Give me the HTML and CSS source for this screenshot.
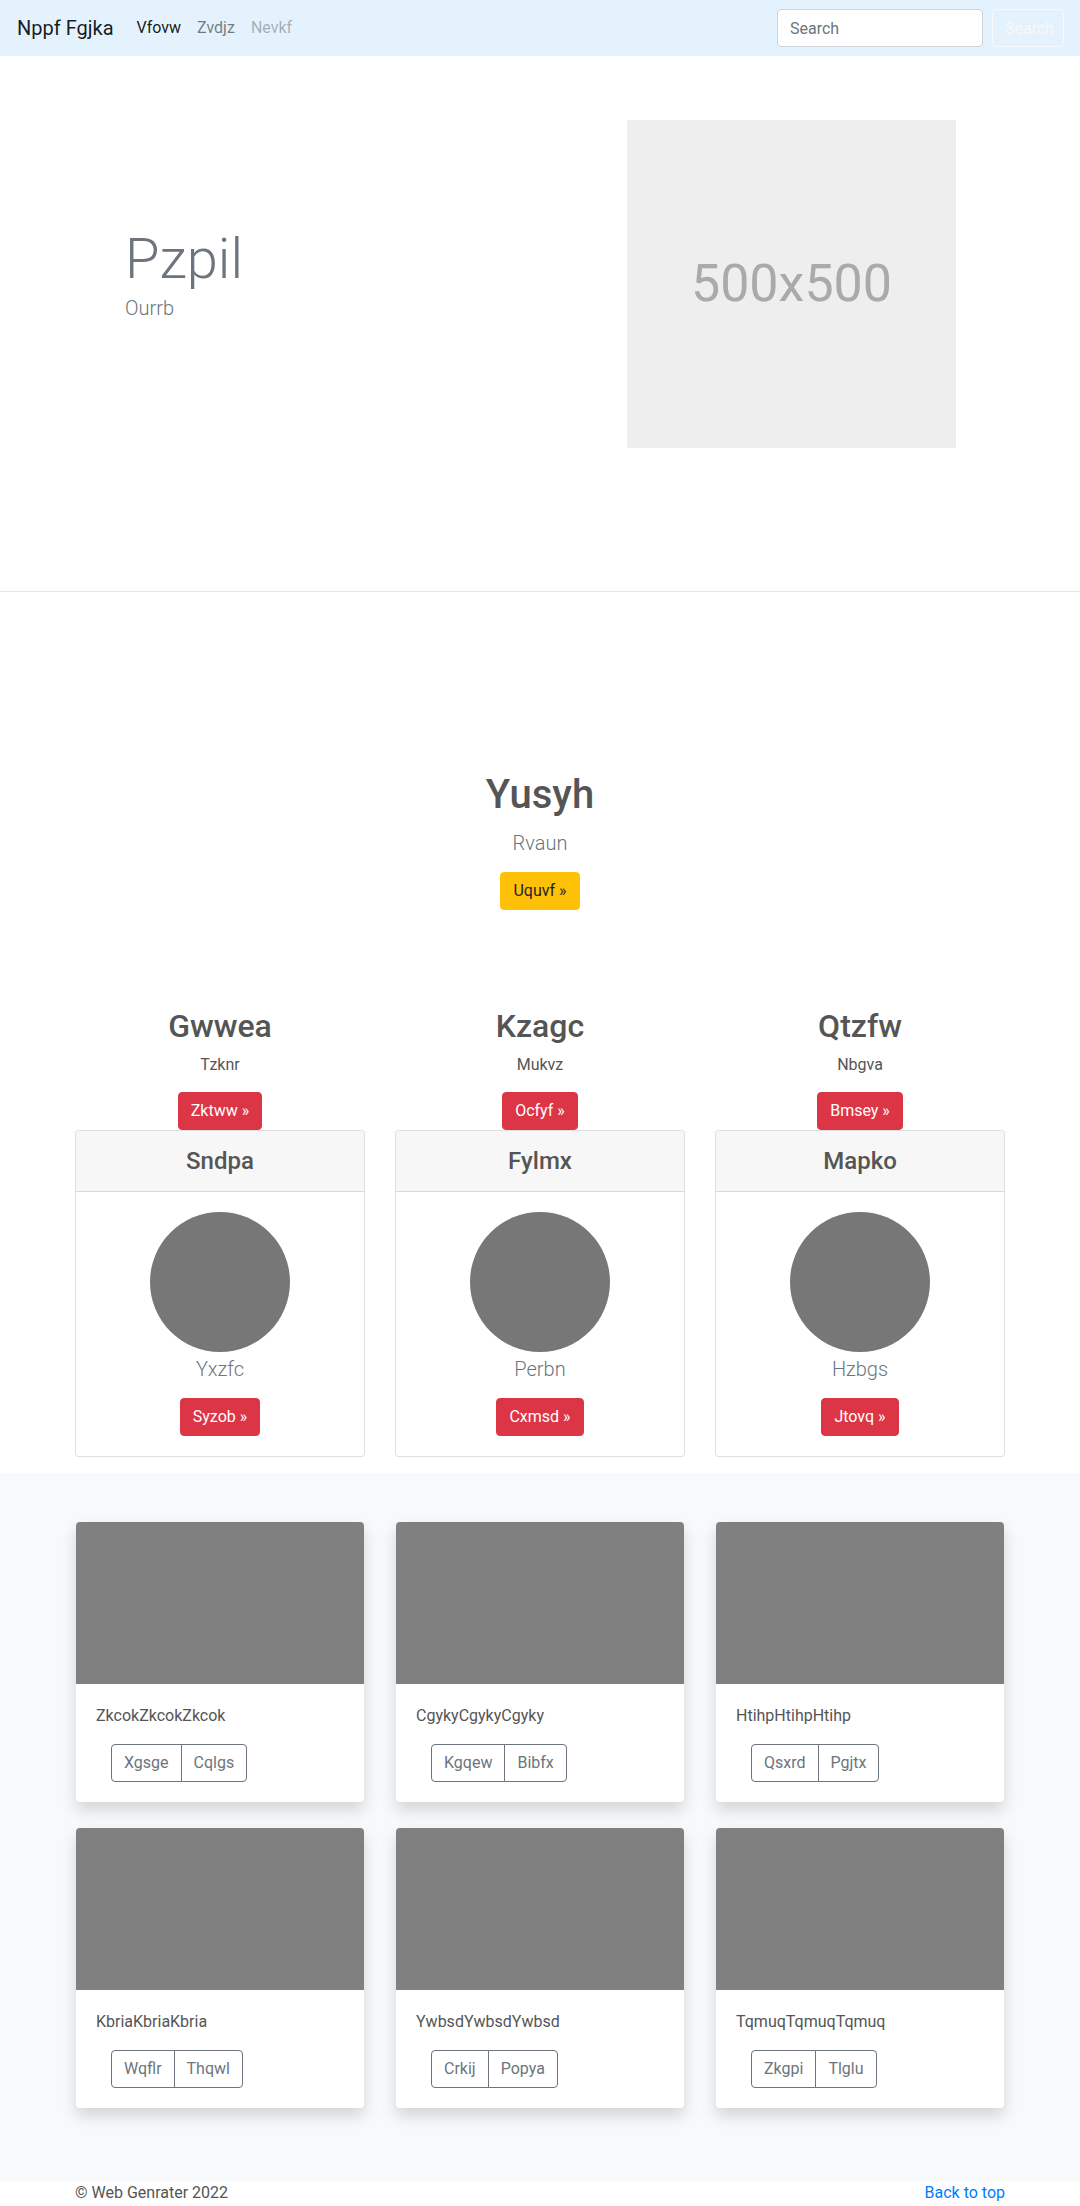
FILE: index.html
```html
<!DOCTYPE html>
<html lang="en">
<head>
<meta charset="utf-8">
<title>Nppf Fgjka</title>
<link rel="stylesheet" href="styles.css">
</head>
<body>
<nav class="navbar">
  <a class="brand" href="#">Nppf Fgjka</a>
  <ul class="nav">
    <li><a class="nav-link active" href="#">Vfovw</a></li>
    <li><a class="nav-link" href="#">Zvdjz</a></li>
    <li><a class="nav-link disabled" href="#">Nevkf</a></li>
  </ul>
  <form class="search">
    <input class="search-input" type="text" placeholder="Search">
    <button class="search-btn" type="button">Search</button>
  </form>
</nav>

<section class="hero">
  <div class="hero-row">
    <div class="hero-text">
      <h1 class="display">Pzpil</h1>
      <p class="hero-lead">Ourrb</p>
    </div>
    <div class="hero-media">
      <div class="placeholder">500x500</div>
    </div>
  </div>
</section>

<section class="intro">
  <h1 class="intro-title">Yusyh</h1>
  <p class="intro-lead">Rvaun</p>
  <a class="btn btn-warning" href="#">Uquvf »</a>
</section>

<section class="features">
  <div class="feature">
    <h2 class="feature-title">Gwwea</h2>
    <p class="feature-text">Tzknr</p>
    <a class="btn btn-danger" href="#">Zktww »</a>
    <div class="fcard">
      <div class="fcard-header"><h4>Sndpa</h4></div>
      <div class="fcard-body">
        <div class="avatar"></div>
        <p class="fcard-lead">Yxzfc</p>
        <a class="btn btn-danger" href="#">Syzob »</a>
      </div>
    </div>
  </div>
  <div class="feature">
    <h2 class="feature-title">Kzagc</h2>
    <p class="feature-text">Mukvz</p>
    <a class="btn btn-danger" href="#">Ocfyf »</a>
    <div class="fcard">
      <div class="fcard-header"><h4>Fylmx</h4></div>
      <div class="fcard-body">
        <div class="avatar"></div>
        <p class="fcard-lead">Perbn</p>
        <a class="btn btn-danger" href="#">Cxmsd »</a>
      </div>
    </div>
  </div>
  <div class="feature">
    <h2 class="feature-title">Qtzfw</h2>
    <p class="feature-text">Nbgva</p>
    <a class="btn btn-danger" href="#">Bmsey »</a>
    <div class="fcard">
      <div class="fcard-header"><h4>Mapko</h4></div>
      <div class="fcard-body">
        <div class="avatar"></div>
        <p class="fcard-lead">Hzbgs</p>
        <a class="btn btn-danger" href="#">Jtovq »</a>
      </div>
    </div>
  </div>
</section>

<section class="album">
  <div class="album-grid">
    <div class="acard">
      <div class="acard-img"></div>
      <div class="acard-body">
        <p class="acard-text">ZkcokZkcokZkcok</p>
        <div class="btn-group"><button class="gbtn">Xgsge</button><button class="gbtn">Cqlgs</button></div>
      </div>
    </div>
    <div class="acard">
      <div class="acard-img"></div>
      <div class="acard-body">
        <p class="acard-text">CgykyCgykyCgyky</p>
        <div class="btn-group"><button class="gbtn">Kgqew</button><button class="gbtn">Bibfx</button></div>
      </div>
    </div>
    <div class="acard">
      <div class="acard-img"></div>
      <div class="acard-body">
        <p class="acard-text">HtihpHtihpHtihp</p>
        <div class="btn-group"><button class="gbtn">Qsxrd</button><button class="gbtn">Pgjtx</button></div>
      </div>
    </div>
    <div class="acard">
      <div class="acard-img"></div>
      <div class="acard-body">
        <p class="acard-text">KbriaKbriaKbria</p>
        <div class="btn-group"><button class="gbtn">Wqflr</button><button class="gbtn">Thqwl</button></div>
      </div>
    </div>
    <div class="acard">
      <div class="acard-img"></div>
      <div class="acard-body">
        <p class="acard-text">YwbsdYwbsdYwbsd</p>
        <div class="btn-group"><button class="gbtn">Crkij</button><button class="gbtn">Popya</button></div>
      </div>
    </div>
    <div class="acard">
      <div class="acard-img"></div>
      <div class="acard-body">
        <p class="acard-text">TqmuqTqmuqTqmuq</p>
        <div class="btn-group"><button class="gbtn">Zkgpi</button><button class="gbtn">Tlglu</button></div>
      </div>
    </div>
  </div>
</section>

<footer class="footer">
  <p class="copy">© Web Genrater 2022</p>
  <a class="top-link" href="#">Back to top</a>
</footer>
</body>
</html>
```

FILE: styles.css
```css
* {
  box-sizing: border-box;
}

html, body {
  margin: 0;
  padding: 0;
}

body {
  font-family: Roboto, "Liberation Sans", Arial, sans-serif;
  font-size: 16px;
  line-height: 1.5;
  color: #555;
  background: #fff;
}

a {
  text-decoration: none;
}

h1, h2, h4, p {
  margin: 0;
}

/* Navbar */
.navbar {
  height: 56px;
  background: #e3f2fd;
  display: flex;
  align-items: center;
  padding: 0 16px 0 17px;
}

.brand {
  font-size: 20px;
  line-height: 30px;
  color: rgba(0, 0, 0, 0.9);
  margin-right: 15px;
}

.nav {
  list-style: none;
  margin: 0;
  padding: 0;
  display: flex;
  flex: 1;
}

.nav-link {
  display: block;
  padding: 8px 8px;
  color: rgba(0, 0, 0, 0.5);
  font-size: 16px;
}

.nav-link.active {
  color: rgba(0, 0, 0, 0.9);
}

.nav-link.disabled {
  color: rgba(0, 0, 0, 0.3);
}

.search {
  display: flex;
  align-items: center;
  gap: 9px;
}

.search-input {
  width: 206px;
  height: 38px;
  border: 1px solid #ced4da;
  border-radius: 4px;
  padding: 6px 12px;
  font-family: inherit;
  font-size: 16px;
  color: #495057;
  background: #fff;
}

.search-input::placeholder {
  color: #6c757d;
}

.search-btn {
  width: 72px;
  height: 38px;
  border: 1px solid #f8f9fa;
  border-radius: 4px;
  background: transparent;
  color: #f8f9fa;
  font-family: inherit;
  font-size: 16px;
  padding: 6px 12px;
}

/* Hero */
.hero {
  padding: 64px 0 143px;
  border-bottom: 1px solid #e5e5e5;
}

.hero-row {
  width: 960px;
  margin: 0 auto;
  display: flex;
  align-items: center;
}

.hero-text {
  flex: 0 0 480px;
  padding-left: 65px;
}

.display {
  font-size: 56px;
  font-weight: 300;
  line-height: 1.2;
  color: #6c757d;
}

.hero-lead {
  font-size: 20px;
  font-weight: 300;
  line-height: 30px;
  color: #6c757d;
  margin-bottom: 19px;
}

.hero-media {
  flex: 0 0 480px;
  padding-left: 87px;
}

.placeholder {
  width: 329px;
  height: 328px;
  background: #eeeeee;
  color: #aaaaaa;
  font-size: 52px;
  display: flex;
  align-items: center;
  justify-content: center;
}

/* Intro */
.intro {
  padding: 179px 0 97px;
  text-align: center;
}

.intro-title {
  font-size: 40px;
  font-weight: 500;
  line-height: 48px;
  color: #555;
  margin-bottom: 9px;
}

.intro-lead {
  font-size: 20px;
  font-weight: 300;
  line-height: 30px;
  color: #6c757d;
  margin-bottom: 14px;
}

/* Buttons */
.btn {
  display: inline-block;
  height: 38px;
  padding: 6px 12px;
  border-radius: 4px;
  font-size: 16px;
  line-height: 24px;
  border: 1px solid transparent;
}

.btn-warning {
  background: #ffc107;
  border-color: #ffc107;
  color: #212529;
}

.btn-danger {
  background: #dc3545;
  border-color: #dc3545;
  color: #fff;
}

/* Features */
.features {
  width: 960px;
  margin: 0 auto;
  display: grid;
  grid-template-columns: repeat(3, 1fr);
  padding-bottom: 16px;
}

.feature {
  padding: 0 15px;
  text-align: center;
}

.feature-title {
  font-size: 32px;
  font-weight: 500;
  line-height: 1.2;
  color: #555;
  margin-bottom: 8px;
}

.feature-text {
  margin-bottom: 15px;
}

.fcard {
  border: 1px solid rgba(0, 0, 0, 0.125);
  border-radius: 4px;
  background: #fff;
}

.fcard-header {
  background: #f7f7f7;
  border-bottom: 1px solid rgba(0, 0, 0, 0.125);
  padding: 16px 20px;
  border-radius: 3px 3px 0 0;
}

.fcard-header h4 {
  font-size: 24px;
  font-weight: 500;
  line-height: 28px;
  color: #555;
}

.fcard-body {
  padding: 20px;
}

.avatar {
  width: 140px;
  height: 140px;
  border-radius: 50%;
  background: #777777;
  margin: 0 auto 2px;
}

.fcard-lead {
  font-size: 20px;
  font-weight: 300;
  line-height: 30px;
  color: #6c757d;
  margin-bottom: 14px;
}

/* Album */
.album {
  background: #f8f9fa;
  padding: 49px 0 73px;
}

.album-grid {
  width: 960px;
  margin: 0 auto;
  display: grid;
  grid-template-columns: repeat(3, 1fr);
  row-gap: 26px;
}

.acard {
  margin: 0 16px;
  background: #fff;
  border-radius: 4px;
  overflow: hidden;
  box-shadow: 0 8px 16px rgba(0, 0, 0, 0.15);
}

.acard-img {
  height: 162px;
  background: #808080;
}

.acard-body {
  padding: 20px;
}

.acard-text {
  margin-bottom: 16px;
  color: #555;
}

.btn-group {
  display: inline-flex;
  margin-left: 15px;
}

.gbtn {
  height: 38px;
  padding: 6px 12px;
  font-family: inherit;
  font-size: 16px;
  line-height: 24px;
  color: #6c757d;
  background: transparent;
  border: 1px solid #6c757d;
}

.gbtn:first-child {
  border-radius: 4px 0 0 4px;
}

.gbtn + .gbtn {
  margin-left: -1px;
  border-radius: 0 4px 4px 0;
}

/* Footer */
.footer {
  width: 960px;
  margin: 0 auto;
  padding: 0 15px;
  display: flex;
  justify-content: space-between;
  align-items: flex-start;
}

.copy {
  color: #555;
}

.top-link {
  color: #007bff;
}
```
